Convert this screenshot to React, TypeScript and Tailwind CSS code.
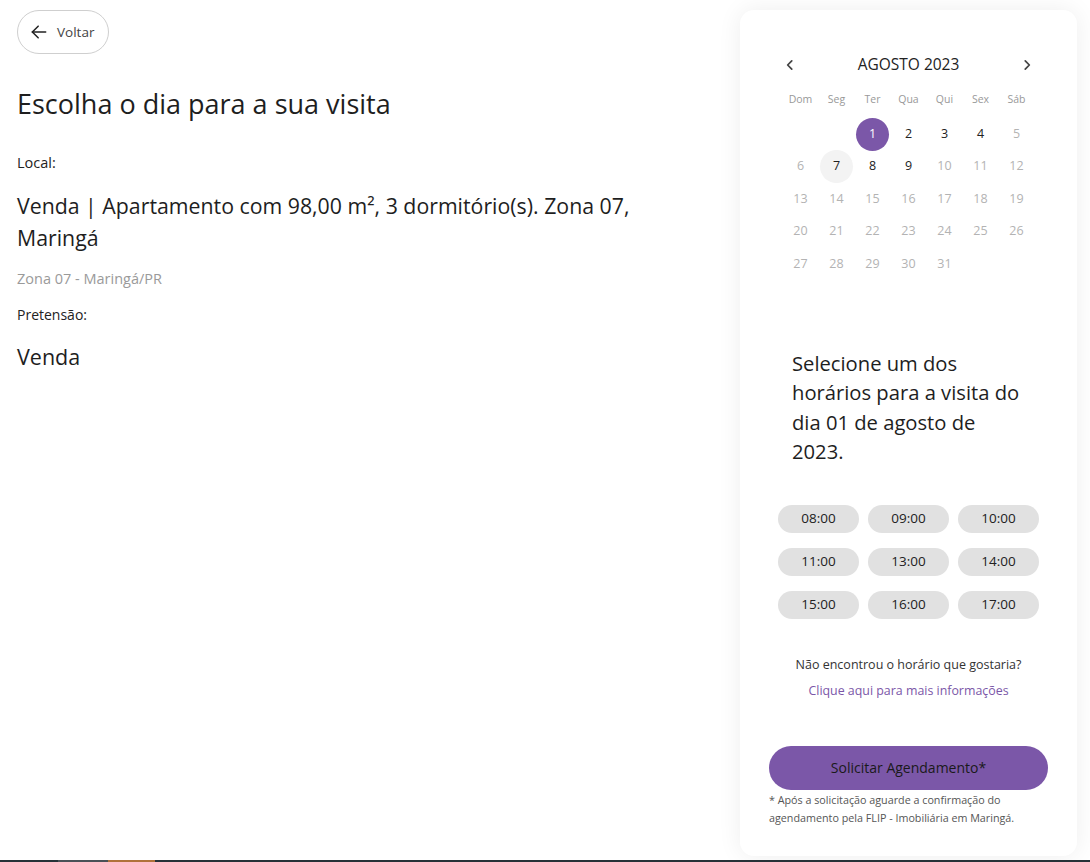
import React from "react";

const font = { fontFamily: "'Open Sans', 'Noto Sans', sans-serif" };

function ArrowLeft() {
  return (
    <svg width="20" height="20" viewBox="0 0 24 24" fill="none" stroke="#222" strokeWidth="1.8" strokeLinecap="round" strokeLinejoin="round">
      <path d="M20 12H4" />
      <path d="M11 5l-7 7 7 7" />
    </svg>
  );
}

function Chevron({ dir }: { dir: "l" | "r" }) {
  return (
    <svg width="14" height="14" viewBox="0 0 24 24" fill="none" stroke="#444" strokeWidth="3" strokeLinecap="round" strokeLinejoin="round">
      {dir === "l" ? <path d="M15 5l-7 7 7 7" /> : <path d="M9 5l7 7-7 7" />}
    </svg>
  );
}

const dayNames = ["Dom", "Seg", "Ter", "Qua", "Qui", "Sex", "Sáb"];
const active = [2, 3, 4, 8, 9];

export default function App() {
  const cells: (number | null)[] = [null, null];
  for (let d = 1; d <= 31; d++) cells.push(d);
  const times = ["08:00", "09:00", "10:00", "11:00", "13:00", "14:00", "15:00", "16:00", "17:00"];
  return (
    <div className="w-[1090px] h-[862px] bg-white flex flex-col overflow-hidden text-[#222]" style={font}>
      <div className="flex flex-1">
        <div className="w-[740px] pl-[17px] pt-[10px]">
          <button className="h-[44px] w-[92px] rounded-full border border-[#cfcfcf] flex items-center gap-[8px] pl-[11px] text-[13.5px] text-[#444]">
            <ArrowLeft />
            <span>Voltar</span>
          </button>
          <h1 className="mt-[34px] text-[27px] leading-[32px] text-[#1e1e1e]">Escolha o dia para a sua visita</h1>
          <div className="mt-[33px] text-[14.5px] font-medium leading-[20px]">Local:</div>
          <div className="mt-[17px] w-[640px] text-[21.3px] leading-[32px] text-[#1e1e1e]">
            Venda | Apartamento com 98,00 m², 3 dormitório(s). Zona 07, Maringá
          </div>
          <div className="mt-[15px] text-[14.5px] leading-[20px] text-[#9a9a9a]">Zona 07 - Maringá/PR</div>
          <div className="mt-[16px] text-[14px] font-medium leading-[20px]">Pretensão:</div>
          <div className="mt-[16px] text-[21.5px] leading-[32px] text-[#1e1e1e]">Venda</div>
        </div>
        <div className="mt-[10px] mb-[4px] w-[337px] rounded-[14px] bg-white shadow-[0_0_24px_rgba(0,0,0,0.07)] flex flex-col items-center px-[29px]">
          <div className="w-[252px] mt-[45px]">
            <div className="flex items-center justify-between h-[20px]">
              <Chevron dir="l" />
              <span className="text-[15.5px] text-[#222]">AGOSTO 2023</span>
              <Chevron dir="r" />
            </div>
            <div className="grid grid-cols-7 mt-[17px]">
              {dayNames.map((n) => (
                <div key={n} className="text-center text-[10.5px] text-[#999] leading-[14px]">{n}</div>
              ))}
            </div>
            <div className="grid grid-cols-7 mt-[12px]">
              {cells.map((d, i) => {
                if (d === null) return <div key={i} className="h-[32.5px]" />;
                const sel = d === 1;
                const hover = d === 7;
                const act = active.includes(d);
                return (
                  <div key={i} className="h-[32.5px] flex items-center justify-center">
                    <div
                      className={
                        "w-[33px] h-[33px] rounded-full flex items-center justify-center text-[12.5px] " +
                        (sel ? "bg-[#7b57a8] text-white" : hover ? "bg-[#f3f3f3] text-[#222]" : act ? "text-[#222]" : "text-[#b3b3b3]")
                      }
                    >
                      {d}
                    </div>
                  </div>
                );
              })}
            </div>
          </div>
          <div className="mt-[68px] w-[228px] self-start ml-[23px] text-[20.2px] leading-[29.5px] font-medium text-[#1e1e1e]">
            Selecione um dos horários para a visita do dia 01 de agosto de 2023.
          </div>
          <div className="mt-[38px] grid grid-cols-3 gap-x-[9px] gap-y-[15px]">
            {times.map((t) => (
              <button key={t} className="w-[81px] h-[28px] rounded-full bg-[#e1e1e1] text-[13.5px] font-medium text-[#222]">
                {t}
              </button>
            ))}
          </div>
          <div className="mt-[38px] text-[12.5px] leading-[16px] text-[#333]">Não encontrou o horário que gostaria?</div>
          <div className="mt-[10px] text-[12.4px] leading-[16px] text-[#7b57a8]">Clique aqui para mais informações</div>
          <button className="mt-[47px] w-full h-[44px] rounded-full bg-[#7b57a8] text-[14px] font-medium text-[#1a1a1a]">
            Solicitar Agendamento*
          </button>
          <div className="mt-[1px] w-full text-[10.75px] leading-[18px] text-[#555]">
            * Após a solicitação aguarde a confirmação do agendamento pela FLIP - Imobiliária em Maringá.
          </div>
        </div>
      </div>
      <div className="h-[2px] flex bg-[#263238]">
        <div className="w-[58px]" />
        <div className="w-[50px] bg-[#4a5157]" />
        <div className="w-[47px] bg-[#b0723a]" />
      </div>
    </div>
  );
}
